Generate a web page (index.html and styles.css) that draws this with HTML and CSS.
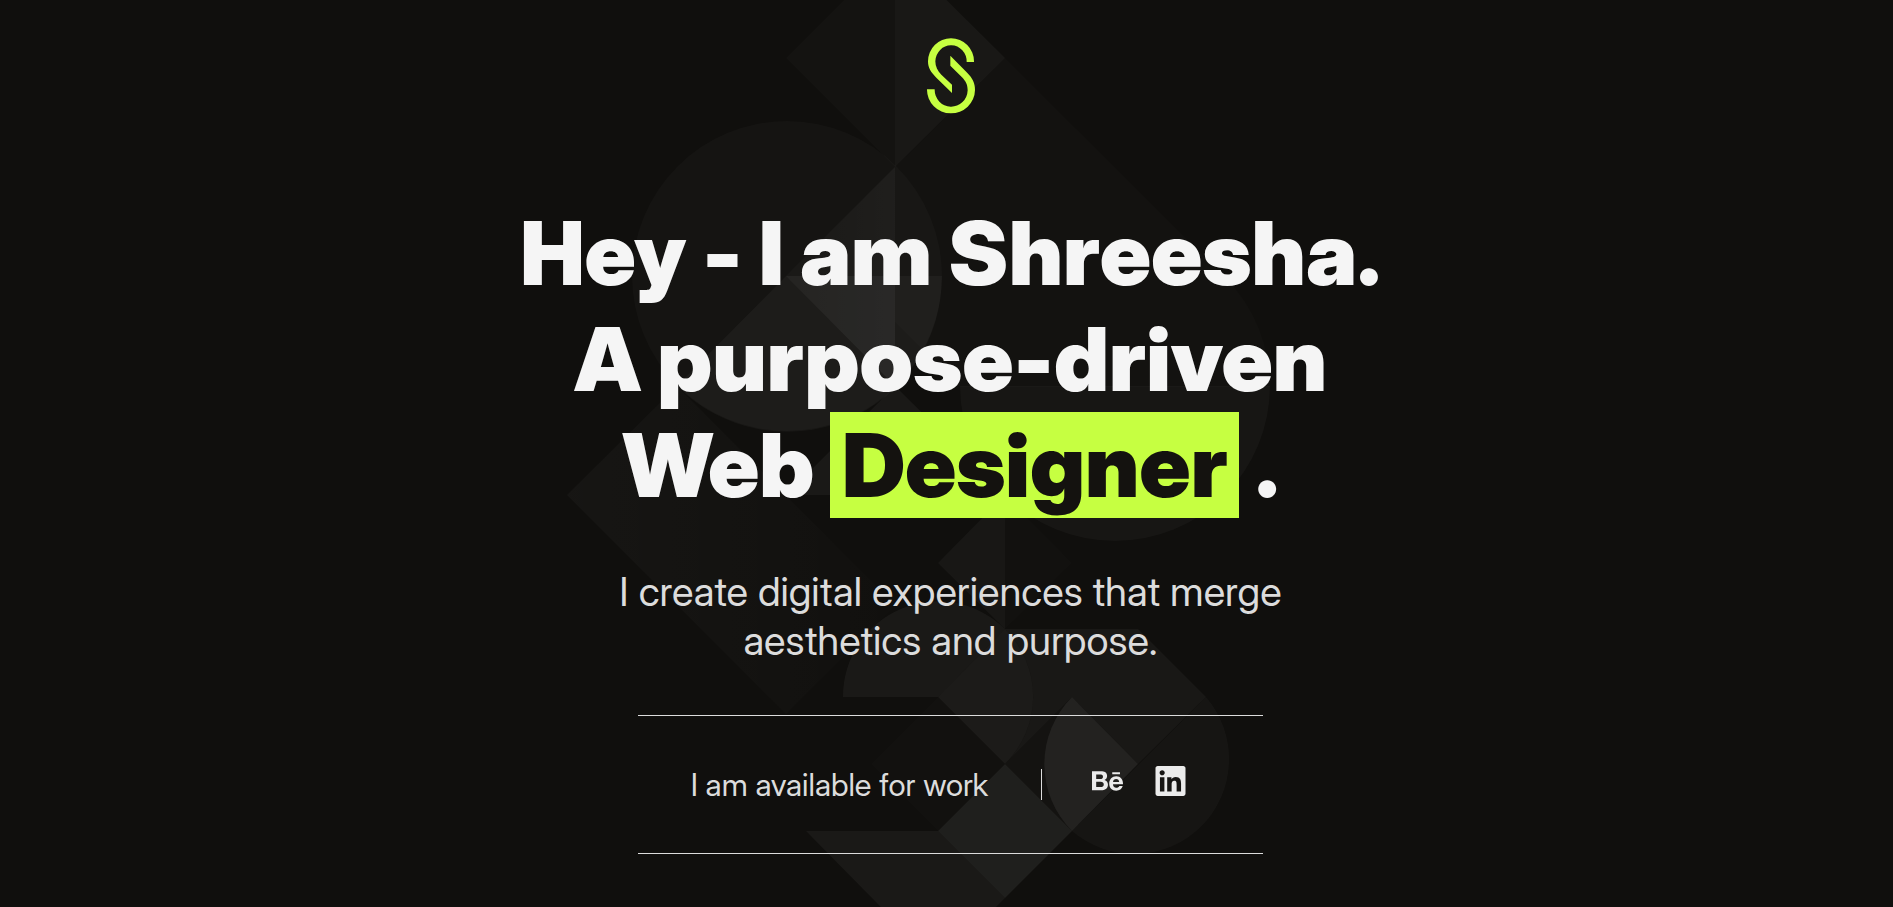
FILE: index.html
```html
<!DOCTYPE html>
<html lang="en">
<head>
<meta charset="utf-8">
<meta name="viewport" content="width=device-width, initial-scale=1">
<title>Shreesha - Web Designer</title>
<link rel="stylesheet" href="styles.css">
</head>
<body>
<div class="backdrop" aria-hidden="true">
<svg class="backdrop-art" viewBox="547 0 800 907">
<defs>
<linearGradient id="right" x1="0" y1="0" x2="1" y2="0"><stop offset="0" stop-color="#fff" stop-opacity=".02"/><stop offset="1" stop-color="#fff" stop-opacity=".045"/></linearGradient>
<linearGradient id="left" x1="1" y1="0" x2="0" y2="0"><stop offset="0" stop-color="#fff" stop-opacity=".005"/><stop offset="1" stop-color="#fff" stop-opacity=".028"/></linearGradient>
</defs>
<g fill="#fff">
<path fill-opacity=".018" d="M786 58 895-51V167Z"/>
<path fill-opacity=".038" d="M895-51 1005 58 895 167Z"/>
<path fill-opacity=".014" d="M1005 58 1225 277A155 155 0 0 1 1270 387H960L895 322V167Z"/>
<circle cx="787" cy="276" r="155" fill-opacity=".022"/>
<path fill="url(#right)" d="M895 167V386L786 276Z"/>
<path fill-opacity=".035" d="M786 276H942A155 155 0 0 1 677 386Z"/>
<path fill-opacity=".015" d="M786 276H895V386Z"/>
<path fill-opacity=".03" d="M960 386H1270A155 155 0 0 1 960 386Z"/>
<path fill="url(#left)" d="M677 386 567 495 786 714 895 605Z"/>
<path fill-opacity=".045" d="M895 386 786 495H1005Z"/>
<path fill-opacity=".035" d="M1005 495 938 563 1005 629Z"/>
<path fill-opacity=".012" d="M1005 495 1072 563 1005 629Z"/>
<path fill-opacity=".045" d="M843 697A95 95 0 0 1 1005 629L938 697Z"/>
<path fill-opacity=".05" d="M1005 629A95 95 0 0 1 1005 764L938 697Z"/>
<path fill-opacity=".012" d="M938 697 1005 764 938 831 871 764Z"/>
<path fill-opacity=".04" d="M1005 629H1138L1206 697 1138 764 1072 697 1005 764A95 95 0 0 0 1005 629Z"/>
<path fill-opacity=".02" d="M1005 764 1072 697 1138 764 1072 831Z"/>
<path fill-opacity=".028" d="M1206 697A95 95 0 0 1 1072 831Z"/>
<path fill-opacity=".065" d="M1072 697A95 95 0 0 0 1072 831L1138 764Z"/>
<path fill-opacity=".065" d="M1005 764 938 831 1005 898 1072 831Z"/>
<path fill-opacity=".045" d="M806 831H938L1005 898 938 965Z"/>
</g>
</svg>
</div>
<main class="hero">
<svg class="logo" viewBox="81 52 144 228" role="img" aria-label="S logo">
<path d="M200 124A47 49 0 0 0 106 122C106 138 113 151 124 162L156 192V217L109 171C92 154 84 142 84 122A69 69 0 0 1 222 122V124Z"/>
<path d="M81 206H104A49 50 0 0 0 203 209C203 190 196 181 186 170L151 135V105L200 155C218 173 225 188 225 208A72 71 0 0 1 81 206Z"/>
</svg>
<h1 class="headline">Hey - I am Shreesha.<br>A purpose-driven<br>Web <span class="mark">Designer</span> .</h1>
<p class="tagline">I create digital experiences that merge<br>aesthetics and purpose.</p>
<section class="contact">
<p class="status">I am available for work</p>
<nav class="social" aria-label="Social profiles">
<a href="#" aria-label="Behance"><svg class="icon" viewBox="0 0 576 512"><path d="M232 237.200c31.800-15.200 48.400-38.200 48.400-74 0-70.600-52.600-87.800-113.300-87.800H0v354.400h171.800c64.400 0 124.900-30.900 124.900-102.900 0-44.500-21.100-77.400-64.700-89.700zM77.900 135.900H151c28.100 0 53.400 7.900 53.400 40.500 0 30.100-19.700 42.200-47.500 42.200h-79v-82.700zm83.300 233.700H77.900V272h84.900c34.300 0 56 14.300 56 50.600 0 35.800-25.900 47-57.600 47zm358.500-240.700H376V94h143.700v34.900zM576 305.200c0-75.900-44.400-139.200-124.900-139.200-78.200 0-131.300 58.800-131.300 135.800 0 79.900 50.300 134.700 131.300 134.700 61.300 0 101-27.600 120.100-86.300H509c-6.700 21.900-34.300 33.500-55.700 33.500-41.300 0-63-24.200-63-65.300h185.100c.3-4.200.6-8.700.6-13.200zM390.400 274c2.300-33.700 24.700-54.800 58.500-54.800 35.400 0 53.200 20.800 56.200 54.800H390.400z"/></svg></a>
<a href="#" aria-label="LinkedIn"><svg class="icon" viewBox="0 0 24 24"><path d="M20.447 20.452h-3.554v-5.569c0-1.328-.027-3.037-1.852-3.037-1.853 0-2.136 1.445-2.136 2.939v5.667H9.351V9h3.414v1.561h.046c.477-.9 1.637-1.850 3.370-1.850 3.601 0 4.267 2.370 4.267 5.455v6.286zM5.337 7.433c-1.144 0-2.063-.926-2.063-2.065 0-1.138.92-2.063 2.063-2.063 1.140 0 2.064.925 2.064 2.063 0 1.139-.925 2.065-2.064 2.065zm1.782 13.019H3.555V9h3.564v11.452zM22.225 0H1.771C.792 0 0 .774 0 1.729v20.542C0 23.227.792 24 1.771 24h20.451C23.200 24 24 23.227 24 22.271V1.729C24 .774 23.200 0 22.222 0h.003z"/></svg></a>
</nav>
</section>
</main>
</body>
</html>
```

FILE: styles.css
```css
* { box-sizing: border-box; }

body {
  margin: 0;
  min-height: 100vh;
  position: relative;
  background: #100f0d;
  color: #dcdcdc;
  font-family: "Inter Display", Inter, "Liberation Sans", sans-serif;
  font-variation-settings: "opsz" 32;
}

.backdrop {
  position: absolute;
  inset: 0;
  overflow: hidden;
  display: flex;
  justify-content: center;
}

.backdrop-art {
  flex: none;
  width: 800px;
  height: 907px;
}

.hero {
  position: relative;
  display: flex;
  flex-direction: column;
  align-items: center;
  padding: 38px 0 48px 8px;
  text-align: center;
}

.logo {
  width: 48px;
  height: 76px;
  fill: #c6ff41;
}

.headline {
  margin: 86px 0 0;
  color: #f5f5f5;
  font-size: 88px;
  font-weight: 900;
  font-feature-settings: "calt" 0;
  line-height: 106px;
}

.mark {
  display: inline-block;
  padding: 0 12px;
  background: #c6ff41;
  color: #14120f;
}

.tagline {
  margin: 49px 0 0;
  font-size: 40px;
  line-height: 49px;
}

.contact {
  display: flex;
  align-items: center;
  justify-content: center;
  width: 625px;
  max-width: 100%;
  height: 139px;
  margin-top: 50px;
  padding-right: 24px;
  border: solid #dcdcdc;
  border-width: 1px 0;
}

.status {
  margin: 0;
  padding-right: 53px;
  font-size: 31px;
  line-height: 36px;
}

.social {
  display: flex;
  align-items: center;
  gap: 32px;
  height: 31px;
  padding-left: 50px;
  border-left: 1px solid #dcdcdc;
}

.social a {
  display: flex;
  margin-bottom: 8px;
}

.icon {
  width: 31px;
  height: 30px;
  fill: #ebebeb;
}
```
